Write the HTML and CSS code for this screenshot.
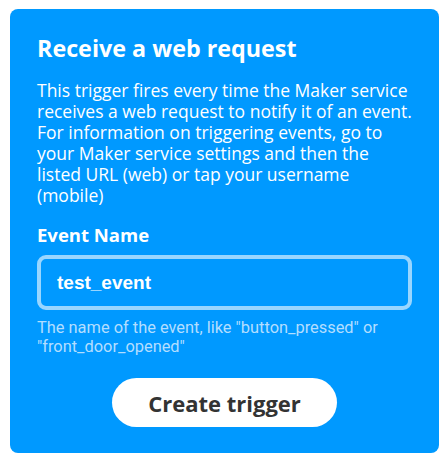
FILE: index.html
```html
<!DOCTYPE html>
<html lang="en">
<head>
<meta charset="utf-8">
<title>Receive a web request</title>
<link rel="stylesheet" href="styles.css">
</head>
<body>
  <section class="card">
    <h2 class="title">Receive a web request</h2>
    <p class="desc">This trigger fires every time the Maker service<br>receives a web request to notify it of an event.<br>For information on triggering events, go to<br>your Maker service settings and then the<br>listed URL (web) or tap your username<br>(mobile)</p>
    <label class="label" for="event">Event Name</label>
    <div class="field">
      <input id="event" class="input" type="text" value="test_event">
    </div>
    <p class="help">The name of the event, like "button_pressed" or "front_door_opened"</p>
    <div class="actions">
      <button class="btn" type="button">Create trigger</button>
    </div>
  </section>
</body>
</html>
```

FILE: styles.css
```css
html, body {
  margin: 0;
  padding: 0;
  background: #ffffff;
}
body {
  padding: 9px 9px 0 10px;
  font-family: "Open Sans", "Lato", sans-serif;
}
.card {
  box-sizing: border-box;
  width: 429px;
  height: 444px;
  background: #0099ff;
  border-radius: 8px;
  padding: 25px 27px 0 27px;
  color: #ffffff;
  display: flex;
  flex-direction: column;
}
.title {
  margin: 0;
  font-size: 23.3px;
  line-height: 28px;
  font-weight: 700;
}
.desc {
  margin: 18px -20px 0 0;
  font-size: 17.5px;
  line-height: 21px;
  font-weight: 400;
  white-space: nowrap;
}
.label {
  margin-top: 17px;
  font-size: 18.5px;
  line-height: 24px;
  font-weight: 700;
}
.field {
  margin-top: 8px;
}
.input {
  box-sizing: border-box;
  width: 375px;
  height: 55px;
  border: 4px solid #99d6ff;
  border-radius: 9px;
  background: #0099ff;
  color: #ffffff;
  font-family: "Liberation Sans", Arial, sans-serif;
  font-weight: 700;
  font-size: 19px;
  padding: 0 16px;
  outline: none;
}
.help {
  margin: 8px 0 0 0;
  font-family: "Roboto", "Liberation Sans", sans-serif;
  font-size: 16.4px;
  line-height: 19px;
  color: #b3deff;
}
.actions {
  display: flex;
  justify-content: center;
  margin-top: 22px;
}
.btn {
  width: 225px;
  height: 49px;
  border: none;
  border-radius: 25px;
  background: #ffffff;
  color: #333333;
  font-family: "Open Sans", "Lato", sans-serif;
  font-weight: 700;
  font-size: 22px;
  cursor: pointer;
}
```
